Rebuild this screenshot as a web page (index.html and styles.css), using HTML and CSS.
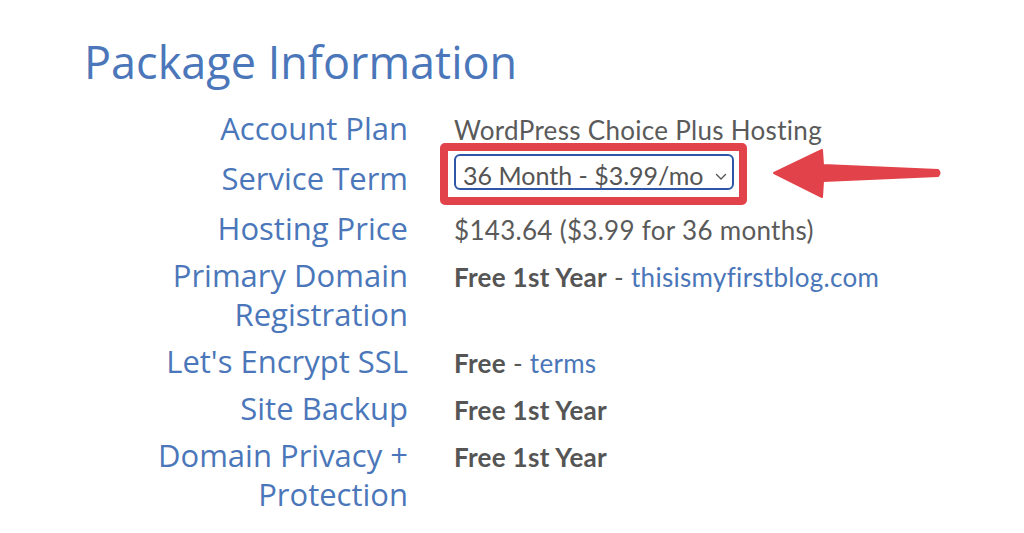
FILE: index.html
```html
<!DOCTYPE html>
<html lang="en">
<head>
    <meta charset="UTF-8">
    <title>Package Information</title>
    <link rel="stylesheet" href="styles.css">
</head>
<body>

    <!-- Package Information -->
    <div class="package">
        <h1>Package Information</h1>

        <div class="info-grid">
            <div class="label">Account Plan</div>
            <div class="value">WordPress Choice Plus Hosting</div>

            <div class="label term">Service Term</div>
            <div class="value term">
                <span class="highlight">
                    <span class="select">
                        36 Month - $3.99/mo
                        <svg class="chevron" width="12" height="8" viewBox="0 0 12 8">
                            <path d="M1.5 1.5 L6 6 L10.5 1.5" fill="none" stroke="#555" stroke-width="1.4" stroke-linecap="round" stroke-linejoin="round"/>
                        </svg>
                    </span>
                </span>
            </div>

            <div class="label">Hosting Price</div>
            <div class="value">$143.64 ($3.99 for 36 months)</div>

            <div class="label">Primary Domain<br>Registration</div>
            <div class="value"><b>Free 1st Year</b> - <a>thisismyfirstblog.com</a></div>

            <div class="label">Let's Encrypt SSL</div>
            <div class="value"><b>Free</b> - <a>terms</a></div>

            <div class="label">Site Backup</div>
            <div class="value"><b>Free 1st Year</b></div>

            <div class="label">Domain Privacy +<br>Protection</div>
            <div class="value"><b>Free 1st Year</b></div>
        </div>
    </div>

    <!-- Annotation arrow -->
    <svg class="arrow" width="180" height="60" viewBox="0 0 180 60">
        <path d="M6 33 L54 10 L55 25 L170 30 Q173 33 170 36 L55 41 L54 57 Z" fill="#e2434a" stroke="#e2434a" stroke-width="2" stroke-linejoin="round"/>
    </svg>

</body>
</html>
```

FILE: styles.css
```css
body {
    margin: 0;
    background: #fff;
    font-family: "Open Sans", sans-serif;
    position: relative;
    height: 533px;
    overflow: hidden;
}

.package {
    padding: 30px 0 0 84px;
}

.package h1 {
    margin: 0 0 15px 0;
    font-size: 45px;
    font-weight: 400;
    line-height: 64px;
    color: #4b77ba;
}

.info-grid {
    display: grid;
    grid-template-columns: 324px auto;
    column-gap: 46px;
    row-gap: 8px;
    align-items: start;
}

.label {
    text-align: right;
    font-size: 31px;
    line-height: 39px;
    color: #4b77ba;
}

.value {
    padding-top: 3px;
    font-family: Lato, "Open Sans", sans-serif;
    font-size: 26px;
    letter-spacing: 0.3px;
    line-height: 36px;
    color: #5a5a5a;
}

.value b {
    font-weight: 700;
    color: #555;
}

.value a {
    color: #4a76b9;
}

.label.term {
    padding: 3px 0;
}

.value.term {
    padding-top: 0;
    margin-top: -2px;
}

.highlight {
    position: relative;
    display: inline-block;
    vertical-align: top;
}

.highlight::before {
    content: "";
    position: absolute;
    top: -11px;
    bottom: -12px;
    left: -14px;
    right: -13px;
    border: 8px solid #e2434a;
    border-radius: 5px;
}

.select {
    box-sizing: border-box;
    display: inline-flex;
    align-items: flex-start;
    gap: 12px;
    height: 36px;
    padding: 6px 5px 0 7px;
    border: 2px solid #2f56a6;
    border-radius: 6px;
    font-size: 25px;
    letter-spacing: 0;
    line-height: 26px;
    color: #555;
}

.chevron {
    margin-top: 11px;
}

.arrow {
    position: absolute;
    left: 768px;
    top: 140px;
}
```
